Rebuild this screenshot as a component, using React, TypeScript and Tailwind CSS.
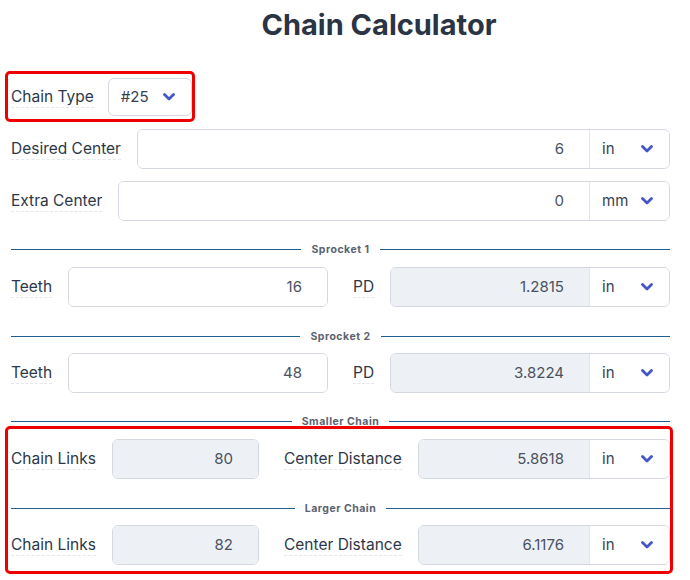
import React from 'react';

const font = { fontFamily: 'Inter, "Noto Sans", sans-serif' };

function Chevron() {
  return (
    <svg width="12" height="8" viewBox="0 0 12 8" className="shrink-0">
      <polyline points="1.5,1.5 6,6 10.5,1.5" fill="none" stroke="#4355c7" strokeWidth="2.8" strokeLinecap="round" strokeLinejoin="round" />
    </svg>
  );
}

function Label({ children }: { children: React.ReactNode }) {
  return (
    <span className="shrink-0 text-[15.5px] leading-[20px] text-[#2d3748] border-b border-dashed border-[#e5e7eb]">
      {children}
    </span>
  );
}

function ValueBox({ value, unit, disabled }: { value: string; unit?: string; disabled?: boolean }) {
  return (
    <div className="flex-1 flex h-10 rounded-md border border-[#d4d8e0] overflow-hidden">
      <div
        className={`flex-1 flex items-center justify-end pr-[25px] text-[15px] text-[#4a5260] ${
          disabled ? 'bg-[#edf1f5]' : 'bg-white'
        }`}
      >
        {value}
      </div>
      {unit && (
        <div className="w-[80px] flex items-center justify-between pl-[12px] pr-[16px] border-l border-[#e2e6ec] bg-white text-[15px] text-[#374151]">
          <span>{unit}</span>
          <Chevron />
        </div>
      )}
    </div>
  );
}

function Field({ label, value, unit, disabled, className = '' }: { label: string; value: string; unit?: string; disabled?: boolean; className?: string }) {
  return (
    <div className={`flex items-center gap-4 ${className}`}>
      <Label>{label}</Label>
      <ValueBox value={value} unit={unit} disabled={disabled} />
    </div>
  );
}

// section heading: thin line, small bold title, thin line
function Divider({ title, className = '' }: { title: string; className?: string }) {
  return (
    <div className={`flex items-center gap-[10px] h-[17px] ${className}`}>
      <div className="flex-1 h-px bg-[#1f5f8f]" />
      <span className="text-[10.5px] font-bold tracking-[0.5px] text-[#5b6270]">{title}</span>
      <div className="flex-1 h-px bg-[#1f5f8f]" />
    </div>
  );
}

export default function App() {
  return (
    <div className="w-[690px] h-[580px] bg-white overflow-hidden" style={font}>
      <h1 className="pl-[68px] pt-[6px] text-center text-[29px] leading-[38px] font-bold text-[#2a3444]">
        Chain Calculator
      </h1>

      <div className="pl-[11px] pr-[20px] mt-[27px]">
        {/* chain type, highlighted */}
        <div className="-ml-[6px] w-[190px] flex items-center gap-[14px] border-[3px] border-[#ee0000] rounded-[5px] pl-[3px] pt-[4px] pb-[3px]">
          <Label>Chain Type</Label>
          <div className="w-[84px] h-[38px] flex items-center justify-between pl-[12px] pr-[16px] rounded-md border border-[#d4d8e0] text-[15px] text-[#374151]">
            <span>#25</span>
            <Chevron />
          </div>
        </div>

        <Field label="Desired Center" value="6" unit="in" className="mt-[7px]" />
        <Field label="Extra Center" value="0" unit="mm" className="mt-[12px]" />

        <Divider title="Sprocket 1" className="mt-[20px] mb-[9px]" />
        <div className="grid grid-cols-2 gap-[25px]">
          <Field label="Teeth" value="16" />
          <Field label="PD" value="1.2815" unit="in" disabled />
        </div>

        <Divider title="Sprocket 2" className="mt-[21px] mb-[8px]" />
        <div className="grid grid-cols-2 gap-[25px]">
          <Field label="Teeth" value="48" />
          <Field label="PD" value="3.8224" unit="in" disabled />
        </div>

        <Divider title="Smaller Chain" className="mt-[20px] -mb-[4px]" />
        {/* results, highlighted */}
        <div className="relative -ml-[6px] -mr-[3px] border-[3px] border-[#ee0000] rounded-[5px] pl-[3px] pt-[10px] pb-[6px]">
          <div className="flex gap-[25px]">
            <Field label="Chain Links" value="80" disabled className="w-[248px]" />
            <Field label="Center Distance" value="5.8618" unit="in" disabled className="flex-1" />
          </div>
          <Divider title="Larger Chain" className="mt-[21px] mb-[8px]" />
          <div className="flex gap-[25px]">
            <Field label="Chain Links" value="82" disabled className="w-[248px]" />
            <Field label="Center Distance" value="6.1176" unit="in" disabled className="flex-1" />
          </div>
        </div>
      </div>
    </div>
  );
}
